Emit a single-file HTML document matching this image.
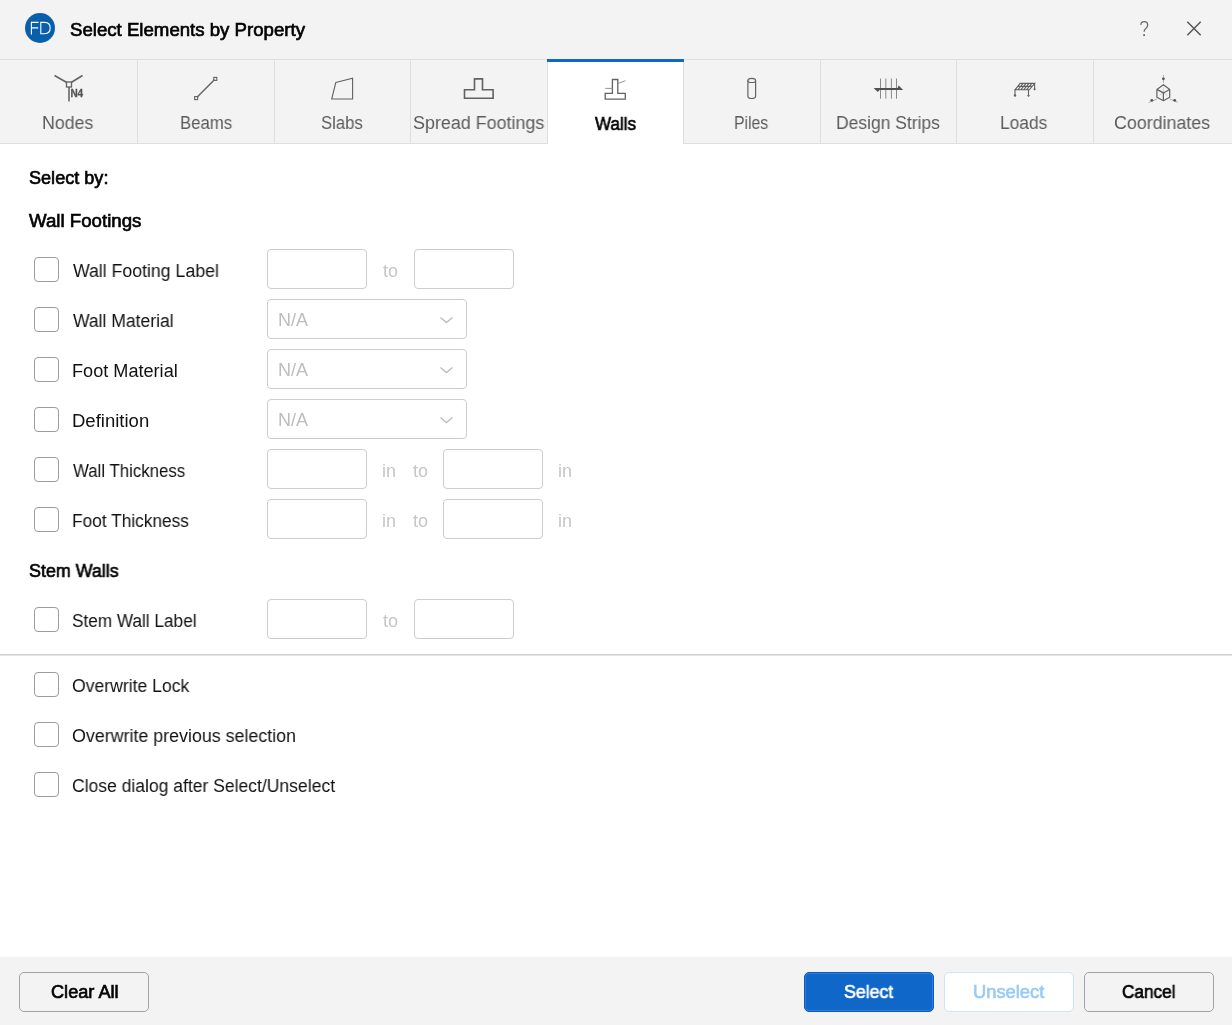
<!DOCTYPE html>
<html><head><meta charset="utf-8"><title>Select Elements by Property</title><style>
*{box-sizing:border-box;margin:0;padding:0}
html,body{width:1232px;height:1025px;overflow:hidden;background:#fff;font-family:"Liberation Sans",sans-serif}
.a{position:absolute}
.t{position:absolute;font-size:18px;line-height:20px;white-space:nowrap;will-change:transform}
.b{font-weight:bold}
.cb{position:absolute;left:34px;width:25px;height:25px;border:1.5px solid #9b9ba3;border-radius:4px;background:#fff}
.inp{position:absolute;height:40px;width:100px;border:1px solid #cdcdcd;border-radius:4px;background:#fff}
.dd{position:absolute;left:267px;width:200px;height:40px;border:1px solid #cdcdcd;border-radius:4px;background:#fff}
.btn{position:absolute;top:972px;width:130px;height:40px;border:1px solid #a1a3a9;border-radius:5px;background:#f3f3f3}
svg{position:absolute;overflow:visible}
</style></head><body>
<div class="a" style="left:0;top:0;width:1232px;height:144px;background:#f3f3f3"></div>
<div class="a" style="left:0;top:59px;width:1232px;height:1px;background:#dedede"></div>
<div class="a" style="left:0;top:143px;width:1232px;height:1px;background:#dedede"></div>
<div class="a" style="left:137px;top:60px;width:1px;height:83px;background:#dedede"></div>
<div class="a" style="left:274px;top:60px;width:1px;height:83px;background:#dedede"></div>
<div class="a" style="left:410px;top:60px;width:1px;height:83px;background:#dedede"></div>
<div class="a" style="left:547px;top:60px;width:1px;height:83px;background:#dedede"></div>
<div class="a" style="left:683px;top:60px;width:1px;height:83px;background:#dedede"></div>
<div class="a" style="left:820px;top:60px;width:1px;height:83px;background:#dedede"></div>
<div class="a" style="left:956px;top:60px;width:1px;height:83px;background:#dedede"></div>
<div class="a" style="left:1093px;top:60px;width:1px;height:83px;background:#dedede"></div>
<div class="a" style="left:548px;top:60px;width:135px;height:84px;background:#fff"></div>
<div class="a" style="left:547px;top:59px;width:137px;height:3px;background:#0f67c6"></div>
<div class="a" style="left:25px;top:13px;width:30px;height:30px;border-radius:50%;background:#0a5fab"></div>
<svg style="left:0;top:0" width="1232" height="60"><g fill="none" stroke="#fff" stroke-width="1.1"><path d="M31.4 34.4V22.4H38.5M31.4 27.9H38.2"/><path d="M40.8 22.4V33.8H44.6C48.3 33.8 50.2 31.5 50.2 28.1C50.2 24.7 48.3 22.4 44.6 22.4Z"/></g><g fill="none" stroke="#555" stroke-width="1.45"><path d="M1187.3 21.8L1200.7 35.2M1200.7 21.8L1187.3 35.2"/></g><g fill="none" stroke="#6a6a6a" stroke-width="1.3"><path d="M1140.8 24.9C1140.9 22.7 1142.4 21.6 1144.2 21.6C1146.3 21.6 1147.7 23.1 1147.7 25C1147.7 26.8 1146.8 27.6 1145.8 28.4C1144.6 29.3 1144.1 30.1 1144.1 31.8"/></g><rect x="1143.2" y="34.2" width="1.8" height="1.8" fill="#6a6a6a"/></svg>
<div class="t" style="left:70.0px;top:20px;transform:scaleX(1.0348);transform-origin:0 0;color:#000;-webkit-text-stroke:0.65px currentColor">Select Elements by Property</div>
<div class="t" style="left:42.45px;top:113px;transform:scaleX(0.9863);transform-origin:0 0;color:#5b5b5b;">Nodes</div>
<div class="t" style="left:179.7px;top:113px;transform:scaleX(0.9311);transform-origin:0 0;color:#5b5b5b;">Beams</div>
<div class="t" style="left:321.1px;top:113px;transform:scaleX(0.9274);transform-origin:0 0;color:#5b5b5b;">Slabs</div>
<div class="t" style="left:412.55px;top:113px;transform:scaleX(0.9947);transform-origin:0 0;color:#5b5b5b;">Spread Footings</div>
<div class="t" style="left:734.25px;top:113px;transform:scaleX(0.8763);transform-origin:0 0;color:#5b5b5b;">Piles</div>
<div class="t" style="left:835.95px;top:113px;transform:scaleX(0.9708);transform-origin:0 0;color:#5b5b5b;">Design Strips</div>
<div class="t" style="left:1000.35px;top:113px;transform:scaleX(0.9646);transform-origin:0 0;color:#5b5b5b;">Loads</div>
<div class="t" style="left:1114.45px;top:113px;transform:scaleX(0.9907);transform-origin:0 0;color:#5b5b5b;">Coordinates</div>
<div class="t" style="left:595.0px;top:114.3px;transform:scaleX(0.9491);transform-origin:0 0;color:#000;-webkit-text-stroke:0.65px currentColor">Walls</div>
<svg style="left:0;top:0" width="1232" height="144">
<g fill="none" stroke="#626262" stroke-width="1.5">
<path d="M54.5 75.5L66.8 82.5M82.5 75.5L71.2 82.5M69 87V101.5"/><rect x="66.5" y="82" width="5" height="5" stroke-width="1.3"/>
</g>
<text x="70.6" y="96.6" font-family="Liberation Sans" font-weight="bold" font-size="10px" fill="#555" stroke="#555" stroke-width="0.3" letter-spacing="-0.3">N4</text>
<g fill="none" stroke="#626262" stroke-width="1.4"><path d="M197 97.2L214.4 79.8"/><rect x="194.6" y="96.6" width="3" height="3" stroke-width="1.1"/><rect x="213.8" y="77.4" width="3" height="3" stroke-width="1.1"/></g>
<g fill="none" stroke="#626262" stroke-width="1.1"><path d="M335.8 82.5L352.6 78.1L352.6 99L331.7 99Z"/></g>
<g fill="none" stroke="#626262" stroke-width="1.6"><path d="M474.5 89.8V78.9H482.5V89.8H493.1V98.2H464.5V89.8Z"/></g>
<g fill="none" stroke="#626262" stroke-width="1.3"><path d="M612.4 93.4V79.5H617.8V93.4H625.3V99.2H605.2V93.4Z"/></g>
<g fill="none" stroke="#8a8a8a" stroke-width="0.9"><path d="M605.2 88.4H612.4M618.3 83.4L625.5 80.7"/></g>
<g fill="none" stroke="#626262" stroke-width="1.2"><path d="M747.9 80.6V96.3C747.9 97.8 749.6 98.5 751.75 98.5C753.9 98.5 755.6 97.8 755.6 96.3V80.6"/><ellipse cx="751.75" cy="80.4" rx="3.85" ry="2.1"/></g>
<g fill="none" stroke="#8a8a8a" stroke-width="1"><path d="M880.5 78.5V98.7M885.8 78.5V98.7M891.4 78.5V98.7M896.5 78.5V98.7"/></g>
<g fill="#505050" stroke="none"><path d="M873.6 88H897.6L898.6 85.6L903.2 90H879.6L877.8 92Z"/></g>
<g fill="none" stroke="#626262" stroke-width="1.1"><path d="M1020.2 83.4H1034.75L1029.3 89.8H1015Z M1017.8 86.4H1032.2 M1023.11 83.4L1017.86 89.8 M1026.02 83.4L1020.72 89.8 M1028.93 83.4L1023.58 89.8 M1031.84 83.4L1026.44 89.8"/><path d="M1015 89.8V95.4M1028.5 89.8V95.8M1034.6 83.4V89"/></g>
<g fill="#626262"><circle cx="1015" cy="95.5" r="1.2"/><path d="M1026.8 95.2H1030.2L1028.5 97Z"/><path d="M1032.9 88.8H1036.3L1034.6 90.6Z"/></g>
<g fill="none" stroke="#c4c4cc" stroke-width="0.8"><path d="M1163.4 92.9L1159.6 95.2M1163.4 92.9L1167.2 95.2M1163.4 92.9V87.6"/></g><g fill="none" stroke="#626262" stroke-width="1.2" stroke-linejoin="round"><path d="M1163.4 84.8L1169.7 89.4V97.2L1163.4 100.7L1156.9 97.2V89.4Z M1156.9 89.4L1163.4 92.9L1169.7 89.4 M1163.4 92.9V100.7"/></g>
<g fill="none" stroke="#9a9aa2" stroke-width="0.8"><path d="M1163.4 75V82.8M1157 99L1148.6 102.5M1169.8 99L1177.7 102.3"/></g>
<g fill="#555"><circle cx="1163.4" cy="78.8" r="1.4"/><circle cx="1151.8" cy="100.3" r="1.4"/><circle cx="1174.7" cy="100.3" r="1.4"/></g>
</svg>
<div class="t" style="left:29.3px;top:168px;transform:scaleX(1.0046);transform-origin:0 0;color:#000;-webkit-text-stroke:0.65px currentColor">Select by:</div>
<div class="t" style="left:29.4px;top:210.8px;transform:scaleX(1.037);transform-origin:0 0;color:#000;-webkit-text-stroke:0.65px currentColor">Wall Footings</div>
<div class="t" style="left:29.3px;top:560.5px;transform:scaleX(0.9933);transform-origin:0 0;color:#000;-webkit-text-stroke:0.65px currentColor">Stem Walls</div>
<div class="cb" style="top:257px"></div>
<div class="t" style="left:73.3px;top:261px;transform:scaleX(0.9825);transform-origin:0 0;color:#111111;">Wall Footing Label</div>
<div class="cb" style="top:307px"></div>
<div class="t" style="left:73.0px;top:311px;transform:scaleX(0.9745);transform-origin:0 0;color:#111111;">Wall Material</div>
<div class="cb" style="top:357px"></div>
<div class="t" style="left:72.0px;top:361px;transform:scaleX(1.0068);transform-origin:0 0;color:#111111;">Foot Material</div>
<div class="cb" style="top:407px"></div>
<div class="t" style="left:72.3px;top:411px;transform:scaleX(1.0288);transform-origin:0 0;color:#111111;">Definition</div>
<div class="cb" style="top:457px"></div>
<div class="t" style="left:73.3px;top:461px;transform:scaleX(0.935);transform-origin:0 0;color:#111111;">Wall Thickness</div>
<div class="cb" style="top:507px"></div>
<div class="t" style="left:72.3px;top:511px;transform:scaleX(0.96);transform-origin:0 0;color:#111111;">Foot Thickness</div>
<div class="cb" style="top:607px"></div>
<div class="t" style="left:72.3px;top:611px;transform:scaleX(0.9551);transform-origin:0 0;color:#111111;">Stem Wall Label</div>
<div class="cb" style="top:672px"></div>
<div class="t" style="left:72.35px;top:676px;transform:scaleX(0.9773);transform-origin:0 0;color:#111111;">Overwrite Lock</div>
<div class="cb" style="top:722px"></div>
<div class="t" style="left:72.3px;top:726px;transform:scaleX(0.9911);transform-origin:0 0;color:#111111;">Overwrite previous selection</div>
<div class="cb" style="top:772px"></div>
<div class="t" style="left:72.45px;top:776px;transform:scaleX(0.9736);transform-origin:0 0;color:#111111;">Close dialog after Select/Unselect</div>
<div class="inp" style="left:267px;top:249px"></div><div class="inp" style="left:414px;top:249px"></div>
<div class="t" style="left:383.0px;top:261px;color:#c6c6c6;">to</div>
<div class="inp" style="left:267px;top:599px"></div><div class="inp" style="left:414px;top:599px"></div>
<div class="t" style="left:383.0px;top:611px;color:#c6c6c6;">to</div>
<div class="inp" style="left:267px;top:449px"></div><div class="inp" style="left:443px;top:449px"></div>
<div class="t" style="left:382.2px;top:461px;color:#c6c6c6;">in</div>
<div class="t" style="left:412.55px;top:461px;color:#c6c6c6;">to</div>
<div class="t" style="left:558.2px;top:461px;color:#c6c6c6;">in</div>
<div class="inp" style="left:267px;top:499px"></div><div class="inp" style="left:443px;top:499px"></div>
<div class="t" style="left:382.2px;top:511px;color:#c6c6c6;">in</div>
<div class="t" style="left:412.55px;top:511px;color:#c6c6c6;">to</div>
<div class="t" style="left:558.2px;top:511px;color:#c6c6c6;">in</div>
<div class="dd" style="top:299px"></div>
<div class="t" style="left:278.05px;top:310px;color:#bdbdbd;">N/A</div>
<svg style="left:0;top:0" width="10" height="10"><path d="M440.5 317.5L446.5 322.5L452.5 317.5" fill="none" stroke="#bcbcbc" stroke-width="1.35"/></svg>
<div class="dd" style="top:349px"></div>
<div class="t" style="left:278.05px;top:360px;color:#bdbdbd;">N/A</div>
<svg style="left:0;top:0" width="10" height="10"><path d="M440.5 367.5L446.5 372.5L452.5 367.5" fill="none" stroke="#bcbcbc" stroke-width="1.35"/></svg>
<div class="dd" style="top:399px"></div>
<div class="t" style="left:278.05px;top:410px;color:#bdbdbd;">N/A</div>
<svg style="left:0;top:0" width="10" height="10"><path d="M440.5 417.5L446.5 422.5L452.5 417.5" fill="none" stroke="#bcbcbc" stroke-width="1.35"/></svg>
<div class="a" style="left:0;top:654px;width:1232px;height:1px;background:#cfcfcf"></div><div class="a" style="left:0;top:655px;width:1232px;height:1px;background:#e4e4e4"></div>
<div class="a" style="left:0;top:957px;width:1232px;height:68px;background:#f3f3f3"></div>
<div class="btn" style="left:19px"></div>
<div class="btn" style="left:804px;background:#0f68c9;border-color:#0a5dbf;box-shadow:inset 0 0 0 1px #2f7dd1"></div>
<div class="btn" style="left:944px;background:#fff;border-color:#cde4f8"></div>
<div class="btn" style="left:1084px"></div>
<div class="t" style="left:50.7px;top:982px;transform:scaleX(1.0092);transform-origin:0 0;color:#000;-webkit-text-stroke:0.65px currentColor">Clear All</div>
<div class="t" style="left:843.7px;top:982px;transform:scaleX(0.9838);transform-origin:0 0;color:#fff;-webkit-text-stroke:0.65px currentColor">Select</div>
<div class="t" style="left:972.8px;top:982px;transform:scaleX(1.0174);transform-origin:0 0;color:#99cbf7;-webkit-text-stroke:0.65px currentColor">Unselect</div>
<div class="t" style="left:1122.25px;top:982px;transform:scaleX(0.9546);transform-origin:0 0;color:#000;-webkit-text-stroke:0.65px currentColor">Cancel</div>
</body></html>
